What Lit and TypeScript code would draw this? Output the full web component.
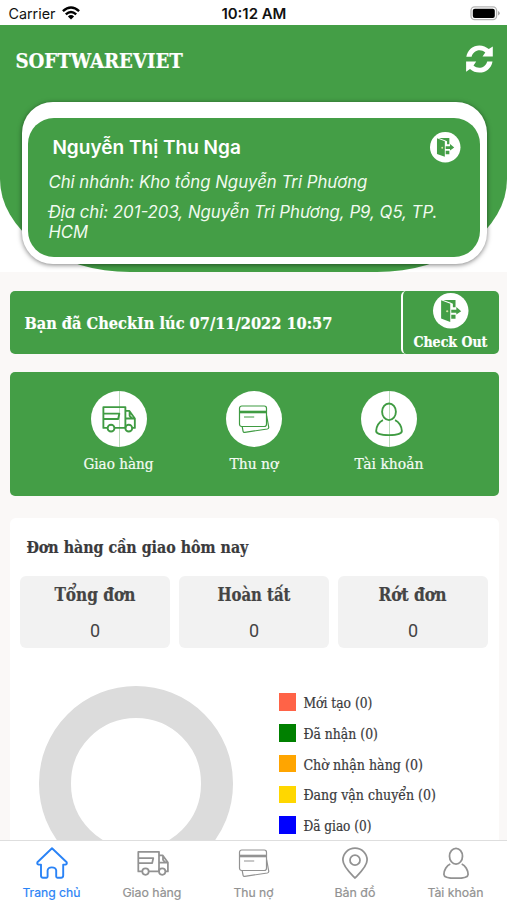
import { LitElement, html, svg, css } from "lit";
import { customElement } from "lit/decorators.js";

// One line of text fitted to a fixed width; the baseline sits 18px below the top of a 24px box.
const line = (text: string, width: number, cls: string) => html`
  <svg class="line ${cls}" width=${width} height="24">
    <text x="-0.6" y="18" textLength=${width} lengthAdjust="spacingAndGlyphs">${text}</text>
  </svg>`;

const glyphs = {
  home: svg`<path d="M16 1.2L1.4 15.2Q.8 17 2.6 17.6H5V28.6Q5 30.8 7 30.8H10.6Q11.6 30.8 11.6 29.6V23.4Q12 20.4 15.8 20.4Q19.8 20.4 20.2 23.4V29.6Q20.2 30.8 21.4 30.8H25Q27.2 30.8 27.2 28.6V17.6H29.6Q31.2 17 30.7 15.2Z"/>`,
  truck: svg`<path d="M4.9 24.4H1.3V4.8H22V24.4H12M22 8.3H25.6L30.9 15.6V24.4H28.6M22 24.4H22.3M22 15.5H30.8M26 9V13L28.4 15.4M1.3 11H16.3L15.2 16H1.3"/><circle cx="8.5" cy="24.6" r="3.2"/><circle cx="25.2" cy="24.6" r="3.2"/>`,
  cards: svg`<rect x="1.5" y="3" width="27" height="20.5" rx="2.2"/><path d="M1.5 9H28.5" stroke-width="2.6"/><path d="M6 14H16.2M4.2 23.6L5.1 28.3Q5.4 29.6 6.8 29.4L29.3 26Q31 25.6 30.7 24L28.6 12.5"/>`,
  user: svg`<ellipse cx="16" cy="9.2" rx="6.5" ry="7.8"/><path d="M10.3 17C6.6 18.6 3.9 23.2 3.9 27.4C3.9 30.2 9.6 31.2 16 31.2S28.1 30.2 28.1 27.4C28.1 23.2 25.4 18.6 21.7 17"/>`,
  pin: svg`<path d="M16 31C14 28.7 3.9 20.2 3.9 13.1A12.1 12 0 0 1 28.1 13.1C28.1 20.2 18 28.7 16 31Z"/><circle cx="16" cy="13.2" r="5"/>`,
};
type Glyph = keyof typeof glyphs;

const icon = (name: Glyph, size: number) => html`
  <svg class="icon ${name}" width=${size} height=${size} viewBox="0 0 32 32">${glyphs[name]}</svg>`;

const door = (size: number) => html`
  <svg class="door" width=${size} height=${size} viewBox="0 0 35 35">
    <circle cx="17.5" cy="17.5" r="17.5" fill="#fff" />
    <path d="M10 7H22.2V14H19.6V10.5L17 9.4Z" />
    <path d="M8 7.2L17 10.6V28.5L8 25.2Z" />
    <path d="M18 21.5H22.2V25.4H18ZM18 16.4H23V13.9L27.8 17.9L23 21.3V19.4H18Z" />
    <circle cx="14" cy="18" r="1.1" fill="#d5e7a0" />
  </svg>`;

@customElement("app-root")
export class AppRoot extends LitElement {
  static styles = css`
    :host {
      display: flex;
      flex-direction: column;
      height: 900px;
      overflow: hidden;
      background: #faf8f7;
      font-family: Inter, sans-serif;
      --green: #449e46;
    }
    * { box-sizing: border-box; }
    svg { display: block; flex: none; overflow: visible; }
    .line { fill: currentColor; }
    .slab { font-family: "DejaVu Serif Condensed", "DejaVu Serif", serif; stroke: currentColor; stroke-width: 0.2; }
    .bold { font-weight: 700; }
    .s14 { font-size: 14px; }
    .s145 { font-size: 14.5px; }
    .s15 { font-size: 15px; }
    .s165 { font-size: 16.5px; }
    .s17 { font-size: 17.5px; }
    .s18 { font-size: 18px; }
    .brand { font-size: 21px; }
    .icon { fill: none; stroke: currentColor; stroke-width: 1.75; stroke-linejoin: round; }
    .icon.cards { stroke-width: 1.2; }
    .door { fill: var(--green); }

    .status { height: 25px; flex: none; background: #fff; color: #111; display: grid; grid-template-columns: 1fr auto 1fr; padding: 1px 7px 0 9px; font-size: 14.3px; }
    .status .clock { font-weight: 600; }
    .carrier { display: flex; gap: 5.5px; }
    .wifi { margin-top: 5px; }
    .battery { justify-self: end; margin-top: 5px; }

    .header { flex: none; height: 247px; background: #fff; }
    .hero { height: 247px; background: var(--green); border-radius: 0 0 130px 130px / 0 0 93px 93px; color: #fff; }
    .topbar { height: 76.5px; display: flex; justify-content: space-between; padding: 24.5px 14px 0 15.5px; }
    .refresh { margin-top: -4.5px; fill: #fff; }
    .profile { height: 162px; margin: 0 20.5px 0 21.5px; padding: 16px 6.5px 6.5px; background: #fff; border-radius: 31px; box-shadow: 0 1px 5px rgba(0, 0, 0, 0.5); }
    .inner { height: 139.5px; display: flex; justify-content: space-between; background: var(--green); border-radius: 26px; padding: 14.5px 20px 0 20.5px; }
    .details { width: 370px; }
    .name { font-size: 18.7px; font-weight: 600; margin: 4px 0 10.3px 4.5px; }
    .info { font-size: 16.6px; font-style: italic; fill: #f1faf0; }
    .branch { margin-bottom: 6px; }
    .second { margin-top: -4px; }

    .checkin { flex: none; height: 63px; margin: 19px 8.5px 0 9.5px; background: var(--green); border-radius: 5px; color: #fff; display: flex; justify-content: space-between; padding-left: 15px; }
    .message { margin-top: 20.3px; }
    .checkout { width: 98px; border-left: 2.5px solid #fff; border-radius: 5px; display: flex; flex-direction: column; align-items: center; padding-top: 1.5px; }
    .checkout .line { margin-top: 1px; }

    .menu { flex: none; height: 123.5px; margin: 18.3px 8.5px 0 9.5px; background: var(--green); border-radius: 5px; color: #f4fbf4; display: grid; grid-template-columns: repeat(3, 135px); justify-content: center; padding-top: 18.5px; }
    .entry { display: flex; flex-direction: column; align-items: center; gap: 4.7px; }
    .disc { width: 56px; height: 56px; border-radius: 50%; background: #fff; color: #3f9b42; display: grid; place-items: center; }
    .disc.split { background: linear-gradient(#b9dcba, #b9dcba) center / 1px 100% no-repeat #fff; }

    .orders { flex: 1; min-height: 0; overflow: hidden; margin: 22px 8.5px 0 9.5px; padding: 17px 10.5px 0; background: #fff; border-radius: 6px 6px 0 0; color: #3a3a3c; }
    .heading { margin-left: 6.5px; }
    .totals { display: grid; grid-template-columns: repeat(3, 150px); justify-content: space-between; margin-top: 17px; }
    .total { height: 72px; border-radius: 6px; background: #f2f2f2; color: #444; display: flex; flex-direction: column; align-items: center; padding-top: 7.5px; }
    .count { font: 18px/24px Roboto, sans-serif; margin-top: 11.5px; }
    .chart { display: flex; align-items: flex-start; margin-top: 38.5px; padding-left: 18.5px; gap: 45.5px; }
    .donut { flex: none; width: 194.5px; height: 194.5px; border: 32px solid #dcdcdc; border-radius: 50%; }
    .legend { display: flex; flex-direction: column; gap: 6.8px; padding-top: 3.7px; }
    .item { display: flex; align-items: center; gap: 8px; }
    .swatch { width: 17.5px; height: 17.5px; }
    .tomato { background: #ff6347; }
    .green { background: #008000; }
    .orange { background: #ffa500; }
    .gold { background: #ffd700; }
    .blue { background: #0000ff; }

    .tabs { flex: none; height: 60px; background: #fff; border-top: 1px solid #dedede; display: grid; grid-template-columns: repeat(5, 1fr); padding: 6px 0 0 1px; font-size: 11.8px; }
    .tab { display: flex; flex-direction: column; align-items: center; color: #929292; }
    .tab.active { color: #2a83f6; }
    .tab .line { stroke: currentColor; stroke-width: 0.2; }
    .active .icon { stroke-width: 1.9; }
  `;

  private entries: [Glyph, string, number][] = [
    ["truck", "Giao hàng", 70],
    ["cards", "Thu nợ", 49],
    ["user", "Tài khoản", 69],
  ];
  private totals: [string, number][] = [["Tổng đơn", 81], ["Hoàn tất", 73], ["Rớt đơn", 68]];
  private legend: [string, string, number][] = [
    ["tomato", "Mới tạo (0)", 69],
    ["green", "Đã nhận (0)", 74.5],
    ["orange", "Chờ nhận hàng (0)", 119.5],
    ["gold", "Đang vận chuyển (0)", 132.5],
    ["blue", "Đã giao (0)", 68],
  ];
  private tabs: [Glyph, string, number][] = [
    ["home", "Trang chủ", 58],
    ["truck", "Giao hàng", 59],
    ["cards", "Thu nợ", 40],
    ["pin", "Bản đồ", 41],
    ["user", "Tài khoản", 56],
  ];

  render() {
    return html`
      <div class="status">
        <div class="carrier">
          ${line("Carrier", 47, "")}
          <svg class="wifi" width="18" height="14" viewBox="0 0 18 14" fill="none" stroke="#000" stroke-width="2.4">
            <path d="M.9 5.2Q9-2.4 17.1 5.2M3.8 8.3Q9 3.5 14.2 8.3" />
            <path d="M5.9 10.4Q9 7.6 12.1 10.4L9 13.6Z" fill="#000" stroke="none" />
          </svg>
        </div>
        ${line("10:12 AM", 65, "clock")}
        <svg class="battery" width="30" height="15" viewBox="0 0 30 15">
          <rect x="1" y=".9" width="25.6" height="12.8" rx="3.6" fill="#fff" stroke="#b5b5b5" stroke-width="1.3" />
          <rect x="2.8" y="2.7" width="22" height="9.2" rx="2" fill="#000" />
          <path d="M28 5Q29.8 5.8 29.8 7.3T28 9.6Z" fill="#aaa" />
        </svg>
      </div>

      <div class="header">
        <div class="hero">
          <div class="topbar">
            ${line("SOFTWAREVIET", 167.5, "slab bold brand")}
            <svg class="refresh" width="27" height="28" viewBox="0 0 27 28">
              <path d="M.3 11.8C1.4 4.8 7 .4 13.4.4C17 .4 20.3 1.8 22.8 4.1L26.8 1.4V11.6H16.5L19.3 7.5C14.5 3.2 7.2 5.3 5.6 11.8Z" />
              <path d="M26.5 16.4C25.4 23.4 19.8 27.6 13.4 27.6C9.8 27.6 6.5 26.3 4 24L.1 26.7V16.5H10.2L7.5 20.6C12.3 24.7 19.5 22.8 21.2 16.4Z" />
            </svg>
          </div>
          <div class="profile">
            <div class="inner">
              <div class="details">
                ${line("Nguyễn Thị Thu Nga", 188.5, "name")}
                ${line("Chi nhánh: Kho tổng Nguyễn Tri Phương", 319, "info branch")}
                ${line("Địa chỉ: 201-203, Nguyễn Tri Phương, P9, Q5, TP.", 389, "info")}
                ${line("HCM", 39.5, "info second")}
              </div>
              ${door(30.5)}
            </div>
          </div>
        </div>
      </div>

      <div class="checkin">
        <div class="message">${line("Bạn đã CheckIn lúc 07/11/2022 10:57", 308, "slab bold s17")}</div>
        <div class="checkout">
          ${door(35.5)} ${line("Check Out", 74, "slab bold s145")}
        </div>
      </div>

      <div class="menu">
        ${this.entries.map(([g, label, w]) => html`
          <div class="entry">
            <div class="disc ${g === "cards" ? "" : "split"}">${icon(g, g === "cards" ? 32 : 34)}</div>
            ${line(label, w, "slab s15")}
          </div>`)}
      </div>

      <div class="orders">
        <div class="heading">${line("Đơn hàng cần giao hôm nay", 222, "slab bold s165")}</div>
        <div class="totals">
          ${this.totals.map(([label, w]) => html`
            <div class="total">${line(label, w, "slab bold s18")}<span class="count">0</span></div>`)}
        </div>
        <div class="chart">
          <div class="donut"></div>
          <div class="legend">
            ${this.legend.map(([c, label, w]) => html`
              <div class="item"><span class="swatch ${c}"></span>${line(label, w, "slab s14")}</div>`)}
          </div>
        </div>
      </div>

      <div class="tabs">
        ${this.tabs.map(([g, label, w], i) => html`
          <div class="tab ${i === 0 ? "active" : ""}">${icon(g, 32)}${line(label, w, "")}</div>`)}
      </div>
    `;
  }
}
